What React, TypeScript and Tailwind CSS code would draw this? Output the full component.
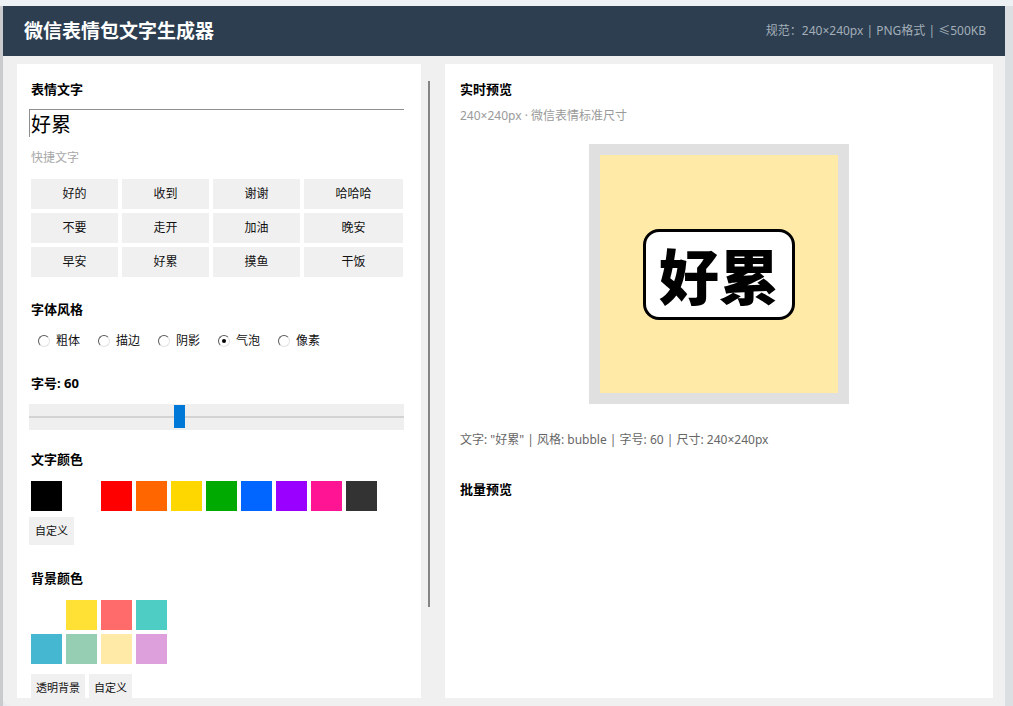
import React from 'react';

const QUICK = ['好的', '收到', '谢谢', '哈哈哈', '不要', '走开', '加油', '晚安', '早安', '好累', '摸鱼', '干饭'];
const STYLES = [
  { label: '粗体', checked: false },
  { label: '描边', checked: false },
  { label: '阴影', checked: false },
  { label: '气泡', checked: true },
  { label: '像素', checked: false },
];
const TEXT_COLORS = ['#000000', '#ffffff', '#ff0000', '#ff6600', '#ffd700', '#00aa00', '#0066ff', '#9900ff', '#ff1493', '#333333'];
const BG_ROW_1 = ['#ffffff', '#ffe135', '#ff6b6b', '#4ecdc4'];
const BG_ROW_2 = ['#45b7d1', '#96ceb4', '#ffeaa7', '#dda0dd'];

function Heading({ children, className = '' }: { children: React.ReactNode; className?: string }) {
  return <h3 className={`text-[13px] leading-[18px] font-bold text-black ${className}`}>{children}</h3>;
}

function Radio({ checked }: { checked: boolean }) {
  return (
    <span className="w-[12px] h-[12px] rounded-full bg-white border border-t-[#5a5a5a] border-l-[#5a5a5a] border-b-[#e3e3e3] border-r-[#e3e3e3] flex items-center justify-center shrink-0">
      {checked && <span className="w-[4px] h-[4px] rounded-full bg-black" />}
    </span>
  );
}

function Swatch({ color }: { color: string }) {
  return <div className="w-[31px] h-[30px] shrink-0" style={{ backgroundColor: color }} />;
}

function SmallButton({ children, className = '' }: { children: React.ReactNode; className?: string }) {
  return (
    <button type="button" className={`h-[28px] px-[5px] bg-[#f0f0f0] text-[11px] text-[#111] ${className}`}>
      {children}
    </button>
  );
}

export default function App() {
  return (
    <div
      className="w-[1013px] h-[706px] overflow-hidden bg-[#e8ebee] flex flex-col"
      style={{ fontFamily: '"Noto Sans", "Noto Sans CJK SC", sans-serif' }}
    >
      <div className="h-[6px] bg-[#eef1f4] shrink-0" />
      <div className="flex flex-1 min-h-0">
        <div className="w-[3px] bg-[#c9cbcd] shrink-0" />
        <div className="w-[1002px] flex flex-col rounded-bl-[8px] overflow-hidden bg-[#f0f0f0]">
          {/* header */}
          <header className="h-[50px] bg-[#2c3e50] flex items-center justify-between pl-[21px] pr-[19px] shrink-0">
            <h1 className="text-[19px] font-bold text-white">微信表情包文字生成器</h1>
            <span className="text-[12px] text-[#a3aeb8]">规范：240×240px | PNG格式 | ≤500KB</span>
          </header>

          {/* body */}
          <div className="flex flex-1 min-h-0 pt-[8px] pb-[8px] pl-[14px]">
            {/* left panel */}
            <div className="w-[404px] bg-white overflow-hidden pl-[14px] pt-[16px]">
              <Heading>表情文字</Heading>
              <input
                readOnly
                value="好累"
                className="mt-[11px] -ml-[2px] w-[375px] h-[28px] border-t border-l border-[#8f8f8f] text-[20px] leading-[26px] pl-[1px] text-black outline-none"
              />
              <div className="mt-[12px] text-[12px] leading-[16px] text-[#a8a8a8]">快捷文字</div>
              <div className="mt-[13px] grid grid-cols-[87px_87px_87px_99px] gap-[4px]">
                {QUICK.map((q) => (
                  <button key={q} type="button" className="h-[30px] bg-[#f0f0f0] text-[12px] text-[#111]">
                    {q}
                  </button>
                ))}
              </div>

              <Heading className="mt-[23px]">字体风格</Heading>
              <div className="mt-[15px] ml-[7px] flex items-center h-[16px]">
                {STYLES.map((s) => (
                  <label key={s.label} className="flex items-center gap-[6px] mr-[18px] text-[12px] text-[#111]">
                    <Radio checked={s.checked} />
                    <span>{s.label}</span>
                  </label>
                ))}
              </div>

              <Heading className="mt-[25px]">字号: 60</Heading>
              <div className="mt-[12px] -ml-[2px] w-[375px] h-[26px] bg-[#efefef] relative flex items-center">
                <div className="w-full h-[2px] bg-[#d3d3d3]" />
                <div className="absolute left-[145px] top-[1px] w-[11px] h-[23px] bg-[#0078d7]" />
              </div>

              <Heading className="mt-[20px]">文字颜色</Heading>
              <div className="mt-[13px] flex gap-[4px]">
                {TEXT_COLORS.map((c) => (
                  <Swatch key={c} color={c} />
                ))}
              </div>
              <SmallButton className="mt-[6px] -ml-[2px] px-[6px]">自定义</SmallButton>

              <Heading className="mt-[24px]">背景颜色</Heading>
              <div className="mt-[13px] flex flex-col gap-[4px]">
                <div className="flex gap-[4px]">
                  {BG_ROW_1.map((c) => (
                    <Swatch key={c} color={c} />
                  ))}
                </div>
                <div className="flex gap-[4px]">
                  {BG_ROW_2.map((c) => (
                    <Swatch key={c} color={c} />
                  ))}
                </div>
              </div>
              <div className="mt-[10px] flex gap-[4px]">
                <SmallButton>透明背景</SmallButton>
                <SmallButton>自定义</SmallButton>
              </div>
            </div>

            {/* scrollbar gutter */}
            <div className="w-[24px] flex justify-start pl-[7px] pt-[17px]">
              <div className="w-[2px] h-[526px] bg-[#858585]" />
            </div>

            {/* right panel */}
            <div className="w-[548px] bg-white px-[15px] pt-[16px]">
              <Heading>实时预览</Heading>
              <div className="mt-[10px] text-[12px] leading-[16px] text-[#9a9a9a]">240×240px · 微信表情标准尺寸</div>
              <div className="mt-[20px] flex justify-center">
                <div className="w-[260px] h-[260px] bg-[#e0e0e0] p-[11px]">
                  <div className="w-full h-full bg-[#ffeaa7] flex items-center justify-center">
                    <div className="w-[152px] h-[91px] bg-white border-[3px] border-black rounded-[16px] flex items-center justify-center">
                      <span className="text-[60px] leading-none font-black text-black" style={{ fontFamily: '"Noto Sans CJK SC", sans-serif' }}>
                        好累
                      </span>
                    </div>
                  </div>
                </div>
              </div>
              <div className="mt-[28px] text-[12px] leading-[16px] text-[#666]">
                文字: "好累" | 风格: bubble | 字号: 60 | 尺寸: 240×240px
              </div>
              <Heading className="mt-[32px]">批量预览</Heading>
            </div>
          </div>
        </div>
        <div className="w-[8px] bg-[#dcdfe2] shrink-0" />
      </div>
    </div>
  );
}
